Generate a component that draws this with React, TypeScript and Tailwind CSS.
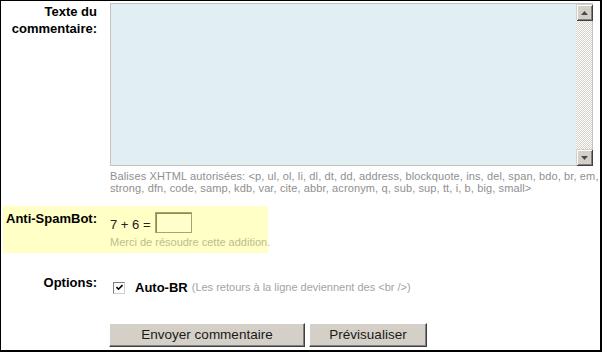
import React from "react";

function ArrowButton({ dir }: { dir: "up" | "down" }) {
  return (
    <div className="w-[16px] h-[16px] bg-[#d4d0c8] border-t border-l border-[#d4d0c8] shadow-[inset_1px_1px_#ffffff,inset_-1px_-1px_#808080,1px_1px_#404040] flex items-center justify-center box-border">
      <svg width="7" height="4" viewBox="0 0 7 4">
        {dir === "up" ? (
          <polygon points="3.5,0 7,4 0,4" fill="#4a4a4a" />
        ) : (
          <polygon points="0,0 7,0 3.5,4" fill="#4a4a4a" />
        )}
      </svg>
    </div>
  );
}

function FieldLabel({ children, width = "w-[109px]" }: { children: React.ReactNode; width?: string }) {
  return (
    <div className={`${width} shrink-0 pr-[13px] text-right font-bold text-[13px] leading-[17px] text-black`}>
      {children}
    </div>
  );
}

export default function App() {
  return (
    <div className="w-[602px] h-[352px] box-border overflow-hidden bg-white border-t border-l border-r-2 border-b-2 border-black font-['Liberation_Sans',Arial,sans-serif] text-black">
      {/* Comment text */}
      <div className="flex pt-[2px]">
        <FieldLabel>
          Texte du
          <br />
          commentaire:
        </FieldLabel>
        <div>
          <div className="w-[483px] h-[163px] box-border border border-[#c3c3c3] bg-[#e1eff3] flex">
            <div className="flex-1" />
            <div className="w-[16px] flex flex-col justify-between bg-[image:repeating-conic-gradient(#d4d0c8_0%_25%,#ffffff_0%_50%)] bg-[length:2px_2px]">
              <ArrowButton dir="up" />
              <ArrowButton dir="down" />
            </div>
          </div>
          <div className="mt-[4px] text-[11px] leading-[12px] tracking-[0.12px] text-[#8f8f8f] whitespace-nowrap">
            Balises XHTML autorisées: &lt;p, ul, ol, li, dl, dt, dd, address, blockquote, ins, del, span, bdo, br, em,
            <br />
            strong, dfn, code, samp, kdb, var, cite, abbr, acronym, q, sub, sup, tt, i, b, big, small&gt;
          </div>
        </div>
      </div>

      {/* Anti spam */}
      <div className="mt-[12px] ml-[2px] w-[265px] bg-[#ffffc6] flex pt-[4px] pb-[5px]">
        <FieldLabel width="w-[107px]">Anti-SpamBot:</FieldLabel>
        <div className="pt-[2px] whitespace-nowrap">
          <div className="flex items-end gap-[5px]">
            <span className="text-[13px] leading-[16px] text-[#222]">7 + 6 =</span>
            <input
              type="text"
              className="w-[37px] h-[21px] box-border bg-[#ffffcc] border border-[#a5a56e] shadow-[inset_1px_1px_#8a8a50] outline-none"
            />
          </div>
          <div className="mt-[3px] text-[11px] leading-[12px] text-[#bdbd8f]">Merci de résoudre cette addition.</div>
        </div>
      </div>

      {/* Options */}
      <div className="mt-[21px] flex">
        <FieldLabel>Options:</FieldLabel>
        <div className="pt-[5px] flex items-center leading-[17px] whitespace-nowrap">
          <span className="ml-[3px] w-[12px] h-[12px] box-border bg-white border border-t-[#808080] border-l-[#808080] border-r-[#d4d0c8] border-b-[#d4d0c8] flex items-center justify-center">
            <svg width="7" height="7" viewBox="0 0 7 7">
              <polyline points="0.5,3 2.5,5.2 6.5,1" fill="none" stroke="#000" strokeWidth="1.6" />
            </svg>
          </span>
          <span className="ml-[10px] font-bold text-[13px]">Auto-BR</span>
          <span className="ml-[4px] text-[11px] text-[#a3a3a3]">(Les retours à la ligne deviennent des &lt;br /&gt;)</span>
        </div>
      </div>

      {/* Buttons */}
      <div className="mt-[27px] pl-[108px] flex gap-[4px]">
        <button className="w-[196px] h-[24px] box-border bg-[#d4d0c8] border border-t-white border-l-white border-r-[#404040] border-b-[#404040] shadow-[inset_-1px_-1px_#808080] text-[13.5px] text-[#1a1a1a] font-['Liberation_Sans',Arial,sans-serif]">
          Envoyer commentaire
        </button>
        <button className="w-[118px] h-[24px] box-border bg-[#d4d0c8] border border-t-white border-l-white border-r-[#404040] border-b-[#404040] shadow-[inset_-1px_-1px_#808080] text-[13.5px] text-[#1a1a1a] font-['Liberation_Sans',Arial,sans-serif]">
          Prévisualiser
        </button>
      </div>
    </div>
  );
}
